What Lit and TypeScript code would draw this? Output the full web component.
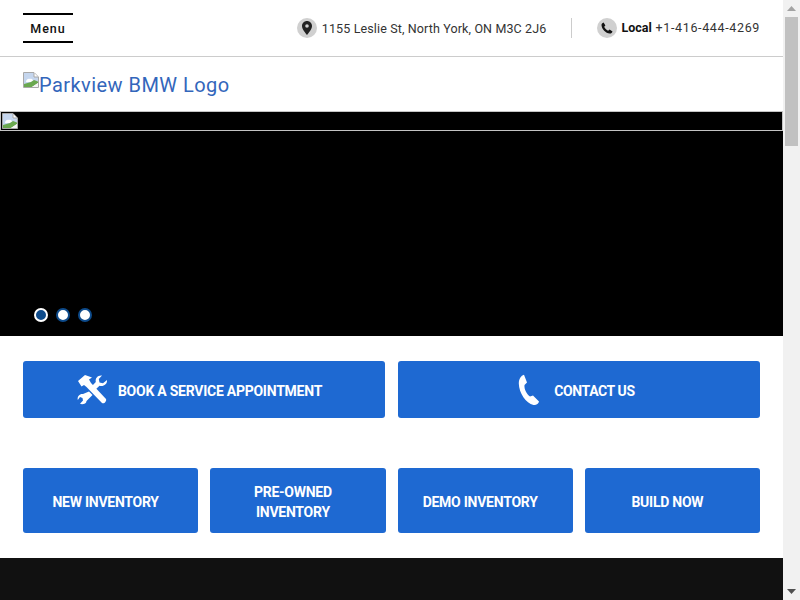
import { LitElement, html, css, svg } from "lit";
import { customElement } from "lit/decorators.js";

const broken = svg`<svg class="broken" width="16" height="16" viewBox="0 0 16 16">
<path d="M0.5 0.5H11L15.5 5V15.5H0.5Z" fill="#fff" stroke="#a8a8a8"/>
<path d="M1 1H11V5H15V9L10 12L1 12Z" fill="#c5d6ee"/>
<path d="M3 10C3 8 5 6 7 7C9 6 10 8 10 9L8 10Z" fill="#fff"/>
<path d="M1 15V12L8 10L11 8L15 9.5V11L9 15Z" fill="#6aa84f"/>
<path d="M9 15L15 11V15Z" fill="#f4f4f4"/>
<path d="M11 1V5H15" fill="#fff" stroke="#a8a8a8"/>
</svg>`;

@customElement("app-root")
export class AppRoot extends LitElement {
  static styles = css`
    :host { display: flex; width: 800px; height: 600px; overflow: hidden; font-family: "Roboto", "Liberation Sans", sans-serif; background: #fff; }
    .page { width: 783px; flex: none; display: flex; flex-direction: column; height: 600px; overflow: hidden; }
    .topbar { height: 56px; flex: none; border-bottom: 1px solid #ccc; display: flex; align-items: center; padding: 0 23px; box-sizing: content-box; }
    .menu { width: 50px; height: 26px; border-top: 2px solid #000; border-bottom: 2px solid #000; display: flex; align-items: center; justify-content: center; font-size: 12.5px; font-weight: 500; letter-spacing: 1px; color: #111; }
    .info { margin-left: auto; display: flex; align-items: center; }
    .addr, .tel { display: flex; align-items: center; gap: 5px; font-size: 12.5px; color: #333; white-space: nowrap; letter-spacing: 0.13px; }
    .tel { letter-spacing: 0.65px; gap: 4px; }
    .tel .txt { margin-top: -1px; }
    .ic { width: 20px; height: 20px; border-radius: 50%; background: #d0d0d0; display: flex; align-items: center; justify-content: center; }
    .sep { width: 1px; height: 20px; background: #ccc; margin: 0 25px; }
    .tel b { font-weight: 700; color: #111; letter-spacing: 0; }
    .logo { height: 54px; flex: none; display: flex; align-items: center; padding: 0 23px; color: #3366bb; font-size: 20px; letter-spacing: 0.45px; }
    .logo .broken { margin-bottom: 8px; }
    .logo span { padding-top: 2px; }
    .hero { height: 225px; flex: none; background: #000; position: relative; }
    .frame { height: 18px; border: 1px solid #c4c4c4; padding: 0 0 0 1px; display: flex; align-items: center; }
    .dots { position: absolute; left: 34px; top: 197px; display: flex; gap: 8px; }
    .dot { width: 10px; height: 10px; border-radius: 50%; background: #fff; border: 2px solid #0d4a8a; }
    .dot.on { background: #0d4a8a; border-color: #fff; }
    .cta { display: grid; grid-template-columns: 1fr 1fr; gap: 13px; padding: 25px 23px 0; }
    .btn { background: #1e69d2; border-radius: 3px; color: #fff; display: flex; align-items: center; justify-content: center; font-weight: 700; font-size: 14px; text-align: center; letter-spacing: -0.25px; }
    .btn span { padding-top: 2px; }
    .cta .btn { height: 57px; gap: 10px; padding-right: 9px; box-sizing: border-box; }
    .cta .contact { gap: 14px; padding-right: 5px; letter-spacing: -0.4px; }
    .grid { display: grid; grid-template-columns: repeat(4, 1fr); gap: 12px; padding: 50px 23px 25px; }
    .grid .btn { height: 65px; box-sizing: border-box; line-height: 20px; padding: 2px 35px 0 25px; }
    .footer { flex: 1; background: #111; }
    .bar { width: 17px; flex: none; background: #f1f1f1; display: flex; flex-direction: column; align-items: center; justify-content: space-between; position: relative; }
    .arrow { width: 17px; height: 17px; display: flex; align-items: center; justify-content: center; }
    .thumb { position: absolute; left: 2px; top: 17px; width: 13px; height: 129px; background: #c1c1c1; }
  `;
  render() {
    return html`
      <div class="page">
        <div class="topbar">
          <div class="menu">Menu</div>
          <div class="info">
            <div class="addr"><span class="ic"><svg width="10" height="14" viewBox="0 0 10 14"><path fill-rule="evenodd" d="M5 0C2.2 0 0 2.2 0 5C0 8 3.5 12 5 14C6.5 12 10 8 10 5C10 2.2 7.8 0 5 0ZM5 3.2A1.8 1.8 0 1 1 5 6.8A1.8 1.8 0 1 1 5 3.2Z" fill="#222"/></svg></span>1155 Leslie St, North York, ON M3C 2J6</div>
            <div class="sep"></div>
            <div class="tel"><span class="ic"><svg width="12" height="12" viewBox="0 0 12 12"><path d="M2.6 0.5L4.4 3.4L3.2 4.800C3.800 6.400 5.400 8 7.100 8.700L8.600 7.500L11.500 9.400C11.200 10.600 10 11.600 8.800 11.500C4.600 11 0.900 7.400 0.500 3.200C0.400 2 1.400 0.800 2.600 0.500Z" fill="#111"/></svg></span><span class="txt"><b>Local</b> +1-416-444-4269</span></div>
          </div>
        </div>
        <div class="logo">${broken}<span>Parkview BMW Logo</span></div>
        <div class="hero">
          <div class="frame">${broken}</div>
          <div class="dots"><span class="dot on"></span><span class="dot"></span><span class="dot"></span></div>
        </div>
        <div class="cta">
          <div class="btn"><svg width="31" height="31" viewBox="0 0 31 31"><path fill="#fff" d="M1 7L8 1L15 3.500L12 5.500L14 9L29 25C30 27 27 30.500 25 29L9.500 13L7 11L4.500 12.500Z"/><path fill="#fff" d="M30 6C30.500 10 26.500 13 22.500 11.800L18.500 15.500L15 12L18.800 8C18 4 21 1 25 1.500L21.800 5L22.500 8.500L26 9.200ZM12 17.500L15.500 21L9.500 27C9.500 30 5 31 3 29.800L6 26.500L5.500 24L3 23L0.800 26C0 22 3 19.500 6 20Z"/></svg><span>BOOK A SERVICE APPOINTMENT</span></div>
          <div class="btn contact"><svg width="22" height="32" viewBox="0 0 22 32"><path fill="#fff" d="M6 .8L9 8.500L6.500 11C6 15 8.500 20 12 22.500L15 21.500L21 27.500C20.500 30 18 31.500 15.500 31C8 29.500 1 19 .8 9.500C.8 5 3 1.500 6 .8Z"/></svg><span>CONTACT US</span></div>
        </div>
        <div class="grid">
          <div class="btn">NEW INVENTORY</div>
          <div class="btn">PRE-OWNED INVENTORY</div>
          <div class="btn">DEMO INVENTORY</div>
          <div class="btn">BUILD NOW</div>
        </div>
        <div class="footer"></div>
      </div>
      <div class="bar">
        <span class="arrow"><svg width="9" height="5"><path d="M0 5L4.500 0L9 5Z" fill="#a3a3a3"/></svg></span>
        <div class="thumb"></div>
        <span class="arrow"><svg width="9" height="5"><path d="M0 0L4.500 5L9 0Z" fill="#505050"/></svg></span>
      </div>
    `;
  }
}
